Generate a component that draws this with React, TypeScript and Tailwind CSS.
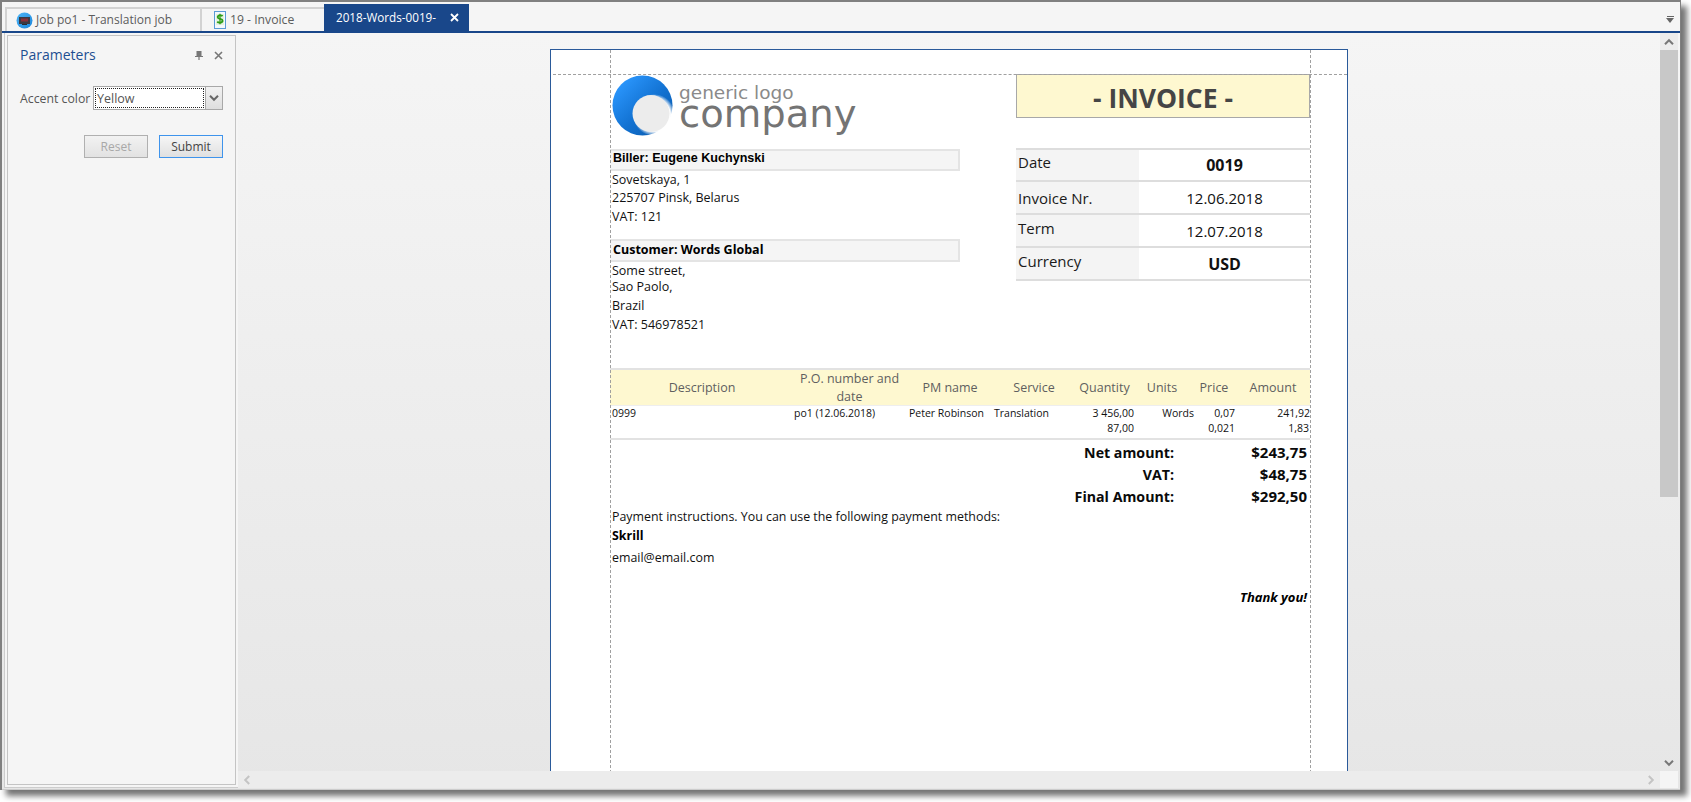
import React from "react";

const font = { fontFamily: '"Open Sans", "Noto Sans", sans-serif' };

function Chevron({ dir, color = "#777" }: { dir: "up" | "down" | "left" | "right"; color?: string }) {
  const rot = { up: 0, right: 90, down: 180, left: 270 }[dir];
  return (
    <svg width="10" height="8" viewBox="0 0 10 8" style={{ transform: `rotate(${rot}deg)` }}>
      <path d="M1 6.2 L5 2.2 L9 6.2" fill="none" stroke={color} strokeWidth="2" />
    </svg>
  );
}

function TabIconJob() {
  return (
    <svg width="17" height="17" viewBox="0 0 17 17" className="shrink-0">
      <defs>
        <linearGradient id="jobg" x1="0" y1="0" x2="1" y2="1">
          <stop offset="0" stopColor="#4db4f5" />
          <stop offset="1" stopColor="#1a86dc" />
        </linearGradient>
      </defs>
      <circle cx="8.5" cy="8.5" r="8" fill="url(#jobg)" />
      <rect x="3" y="5" width="11" height="7" fill="#3a3a44" />
      <rect x="5" y="6.5" width="7" height="3" fill="#8a3038" />
      <rect x="6" y="12" width="5" height="1" fill="#2a2a30" />
    </svg>
  );
}

function TabIconInvoice() {
  return (
    <svg width="12" height="18" viewBox="0 0 12 18" className="shrink-0">
      <rect x="0.5" y="0.5" width="11" height="17" fill="#f4f8fc" stroke="#5b9bd5" />
      <rect x="2" y="3" width="8" height="11" fill="#e4f2de" />
      <path d="M8.6 5 C7.4 3.9 3.6 4 3.7 6.2 C3.8 8.4 8.6 7.4 8.6 9.8 C8.6 12 4.6 12 3.2 10.8" fill="none" stroke="#2e9b16" strokeWidth="1.8" />
      <path d="M6 2.8 V13.2" stroke="#2e9b16" strokeWidth="1.3" />
    </svg>
  );
}

function Logo() {
  return (
    <div className="flex h-[75px] pl-[2px] pt-[1px]">
      <svg width="61" height="61" viewBox="0 0 61 61" className="shrink-0">
        <defs>
          <linearGradient id="lg" x1="0.1" y1="0.1" x2="0.9" y2="0.9">
            <stop offset="0" stopColor="#2c98ff" />
            <stop offset="0.55" stopColor="#1272d2" />
            <stop offset="1" stopColor="#0a5cb0" />
          </linearGradient>
          <radialGradient id="lw" cx="0.5" cy="0.5" r="0.5">
            <stop offset="0.78" stopColor="#ffffff" />
            <stop offset="1" stopColor="#ffffff" stopOpacity="0" />
          </radialGradient>
        </defs>
        <circle cx="30.5" cy="30.5" r="30" fill="url(#lg)" />
        <circle cx="42" cy="40" r="21" fill="url(#lw)" />
        <circle cx="39" cy="38.5" r="18.5" fill="#ececec" />
      </svg>
      <div className="ml-[6px] flex flex-col" style={{ fontFamily: '"DejaVu Sans", sans-serif' }}>
        <div className="mt-[8px] text-[18.5px] leading-[20px] text-[#8a8a8a]">generic logo</div>
        <div className="-mt-[11px] text-[38.5px] leading-[44px] text-[#747474]">company</div>
      </div>
    </div>
  );
}

const headerCols = [
  ["Description", "w-[184px]"],
  ["P.O. number and date", "w-[111px] pr-[2px] pl-[2px]"],
  ["PM name", "w-[87px] pl-[3px]"],
  ["Service", "w-[84px]"],
  ["Quantity", "w-[58px] pr-[1px]"],
  ["Units", "w-[56px]"],
  ["Price", "w-[48px]"],
  ["Amount", "w-[72px] pr-[2px]"],
];

function InfoRow({ label, value, bold, h, lh }: { label: string; value: string; bold?: boolean; h: string; lh: string }) {
  return (
    <div className={`flex ${h}`}>
      <div className={`w-[123px] bg-[#f4f4f4] border-b-2 border-[#dddddd] pl-[2px] text-[15px] text-[#1a1a1a] ${lh}`}>{label}</div>
      <div className={`flex-1 flex items-center justify-center border-b-2 border-[#dddddd] text-[#111] ${bold ? "font-bold text-[16px]" : "text-[15px] pt-[2px]"}`}>
        {value}
      </div>
    </div>
  );
}

function Total({ label, value }: { label: string; value: string }) {
  return (
    <div className="flex h-[22px] items-center justify-end font-bold text-[#0a0a0a]">
      <div className="w-[250px] pt-[2px] text-right text-[14.2px]">{label}</div>
      <div className="w-[136px] pr-[3px] text-right text-[15px]">{value}</div>
    </div>
  );
}

function Page() {
  return (
    <div className="relative mt-[16px] h-[740px] w-[798px] shrink-0 border border-[#2a5a9a] bg-white pl-[59px] pt-[24px]">
      {/* print margin guides */}
      <div className="absolute left-[59px] top-0 bottom-0 border-l border-dashed border-[#a0a0a0]" />
      <div className="absolute left-[759px] top-0 bottom-0 border-l border-dashed border-[#a0a0a0]" />
      <div className="absolute left-[2px] right-0 top-[24px] border-t border-dashed border-[#a0a0a0]" />

      <div className="w-[700px]">
        <div className="flex h-[294px] justify-between">
          <div className="w-[350px]">
            <Logo />
            <div className="h-[22px] border-2 border-l-0 border-[#e4e4e4] bg-[#f5f5f5] pl-[3px] text-[12.6px] font-bold leading-[15px] text-black" style={{ fontFamily: '"Liberation Sans", sans-serif' }}>
              Biller: Eugene Kuchynski
            </div>
            <div className="pl-[2px] text-[12.5px] leading-[18px] text-[#111]">
              <div>Sovetskaya, 1</div>
              <div>225707 Pinsk, Belarus</div>
              <div className="h-[18px] leading-[20px]">VAT: 121</div>
            </div>
            <div className="mt-[14px] h-[23px] border-2 border-l-0 border-[#e4e4e4] bg-[#f5f5f5] pl-[3px] text-[12.5px] font-bold leading-[18px] text-black">
              Customer: Words Global
            </div>
            <div className="pl-[2px] text-[12.5px] text-[#111]">
              <div className="h-[17px] leading-[18px]">Some street,</div>
              <div className="h-[18px] leading-[16px]">Sao Paolo,</div>
              <div className="h-[18px] leading-[17px]">Brazil</div>
              <div className="h-[18px] leading-[19px]">VAT: 546978521</div>
            </div>
          </div>
          <div className="w-[294px]">
            <div className="flex h-[44px] items-center justify-center border border-[#a8a8a8] bg-[#fef8d0] pt-[5px] text-[26.5px] font-bold text-[#454545]">
              - INVOICE -
            </div>
            <div className="mt-[30px] border-t-2 border-[#dddddd]">
              <InfoRow label="Date" value="0019" bold h="h-[32px]" lh="leading-[24px]" />
              <InfoRow label="Invoice Nr." value="12.06.2018" h="h-[33px]" lh="leading-[32px]" />
              <InfoRow label="Term" value="12.07.2018" h="h-[33px]" lh="leading-[26px]" />
              <InfoRow label="Currency" value="USD" bold h="h-[33px]" lh="leading-[26px]" />
            </div>
          </div>
        </div>

        <div className="border-t-2 border-[#e2e2e2]">
          <div className="flex h-[36px] items-center border-b border-[#eeeeee] bg-[#fef8d0] text-center text-[12.5px] leading-[18px] text-[#5f5f5f]">
            {headerCols.map(([t, w]) => (
              <div key={t} className={`${w} shrink-0`}>{t}</div>
            ))}
          </div>
          <div className="flex h-[34px] border-b-2 border-[#e2e2e2] text-[10.5px] leading-[15px] text-[#111]">
            <div className="w-[184px] pl-[2px]">0999</div>
            <div className="w-[115px]">po1 (12.06.2018)</div>
            <div className="w-[85px]">Peter Robinson</div>
            <div className="w-[86px]">Translation</div>
            <div className="w-[54px] text-right">
              <div>3 456,00</div>
              <div>87,00</div>
            </div>
            <div className="w-[60px] text-right">Words</div>
            <div className="w-[41px] text-right">
              <div>0,07</div>
              <div>0,021</div>
            </div>
            <div className="w-[75px] text-right">
              <div>241,92</div>
              <div className="pr-[1px]">1,83</div>
            </div>
          </div>
        </div>

        <div className="pt-[1px]">
          <Total label="Net amount:" value="$243,75" />
          <Total label="VAT:" value="$48,75" />
          <Total label="Final Amount:" value="$292,50" />
        </div>

        <div className="pl-[2px] text-[12.4px] text-[#111]">
          <div className="mt-[1px] leading-[17px]">Payment instructions. You can use the following payment methods:</div>
          <div className="mt-[2px] font-bold leading-[18px] text-black">Skrill</div>
          <div className="mt-[4px] leading-[18px]">email@email.com</div>
        </div>
        <div className="mt-[21px] pr-[3px] text-right text-[13px] font-bold italic leading-[18px] text-black">Thank you!</div>
      </div>
    </div>
  );
}

export default function App() {
  return (
    <div className="h-[802px] w-[1691px] overflow-hidden bg-white" style={font}>
      <div className="flex h-[790px] w-[1681px] flex-col border-l-2 border-t-2 border-r border-[#808080] bg-[#f5f5f5] shadow-[6px_6px_6px_rgba(0,0,0,0.55)]">
        {/* tab strip */}
        <div className="flex h-[31px] shrink-0 items-end border-b-2 border-[#19478a] pl-[3px]">
          <div className="flex h-[24px] w-[197px] items-center gap-[3px] border-x-2 border-t-2 border-[#d2d2d2] pl-[9px] text-[12px] text-[#5c5c5c]">
            <TabIconJob />
            <span className="whitespace-nowrap">Job po1 - Translation job</span>
          </div>
          <div className="flex h-[24px] w-[122px] items-center gap-[4px] border-t-2 border-[#d2d2d2] pl-[12px] text-[12.2px] text-[#5c5c5c]">
            <TabIconInvoice />
            <span className="whitespace-nowrap">19 - Invoice</span>
          </div>
          <div className="flex h-[27px] w-[145px] items-center justify-between bg-[#19478a] pl-[12px] pr-[10px] text-[11.7px] text-white">
            <span className="whitespace-nowrap">2018-Words-0019-</span>
            <svg width="9" height="9" viewBox="0 0 9 9">
              <path d="M1 1 L8 8 M8 1 L1 8" stroke="#ffffff" strokeWidth="1.8" />
            </svg>
          </div>
          <div className="flex-1" />
          <div className="mb-[8px] mr-[6px] flex flex-col items-center">
            <div className="h-[1px] w-[7px] bg-[#666]" />
            <svg width="8" height="5" viewBox="0 0 8 5" className="mt-[1px]">
              <path d="M0 0 H8 L4 5 Z" fill="#666" />
            </svg>
          </div>
        </div>

        {/* body */}
        <div className="flex min-h-0 flex-1 border-b border-[#cccccc] bg-gradient-to-b from-[#f5f5f5] to-[#e6e6e6] pb-[1px] pl-[2px] pr-[2px]">
          {/* side panel */}
          <div className="flex w-[234px] shrink-0 border-l border-b border-[#cccccc] bg-[#f5f5f5] pb-[2px] pl-[2px]">
            <div className="mt-[2px] flex w-[229px] flex-col border border-[#c4c4c4] bg-[#f5f5f5]">
              <div className="mt-[8px] flex items-center justify-between pl-[12px] pr-[12px]">
                <span className="text-[14px] leading-[22px] text-[#1d4f91]">Parameters</span>
                <div className="flex items-center gap-[11px]">
                  <svg width="8" height="9" viewBox="0 0 8 9">
                    <path d="M1.5 0 H6.5 V5 H8 V6 H4.6 V9 H3.4 V6 H0 V5 H1.5 Z" fill="#777" />
                  </svg>
                  <svg width="9" height="9" viewBox="0 0 9 9">
                    <path d="M1 1 L8 8 M8 1 L1 8" stroke="#777" strokeWidth="1.6" />
                  </svg>
                </div>
              </div>
              <div className="mt-[20px] flex items-center pl-[12px]">
                <span className="w-[73px] whitespace-nowrap pt-[2px] text-[12.3px] text-[#555]">Accent color</span>
                <div className="flex h-[24px] w-[130px] border border-[#a8a8a8] bg-white">
                  <div className="m-[1px] flex-1 border border-dotted border-[#222] pl-[1px] text-[12.5px] leading-[19px] text-[#555]">Yellow</div>
                  <div className="flex w-[17px] items-center justify-center border-l border-[#a8a8a8] bg-gradient-to-b from-[#f2f2f2] to-[#dedede]">
                    <Chevron dir="down" color="#666" />
                  </div>
                </div>
              </div>
              <div className="mt-[25px] flex justify-end gap-[11px] pr-[12px]">
                <button className="h-[23px] w-[64px] border border-[#b0b0b0] bg-gradient-to-b from-[#f2f2f2] to-[#e2e2e2] text-[12px] text-[#a8a8a8]">Reset</button>
                <button className="h-[23px] w-[64px] border border-[#3f94ec] bg-gradient-to-b from-[#f6f6f6] to-[#e0e0e0] text-[12px] text-[#444]">Submit</button>
              </div>
            </div>
          </div>

          {/* document viewer */}
          <div className="flex min-w-0 flex-1 flex-col">
            <div className="flex min-h-0 flex-1">
              <div className="flex min-w-0 flex-1 justify-center overflow-hidden">
                <Page />
              </div>
              <div className="flex w-[18px] shrink-0 flex-col">
                <div className="flex h-[17px] items-center justify-center bg-[#ececec]">
                  <Chevron dir="up" />
                </div>
                <div className="h-[447px] bg-[#c8c8c8]" />
                <div className="flex-1" />
                <div className="flex h-[17px] items-center justify-center">
                  <Chevron dir="down" />
                </div>
              </div>
            </div>
            <div className="flex h-[17px] shrink-0">
              <div className="flex flex-1 items-center justify-between bg-[#ececec] px-[4px]">
                <Chevron dir="left" color="#c4c4c4" />
                <Chevron dir="right" color="#c4c4c4" />
              </div>
              <div className="w-[18px] bg-[#f5f5f5]" />
            </div>
          </div>
        </div>
      </div>
    </div>
  );
}
